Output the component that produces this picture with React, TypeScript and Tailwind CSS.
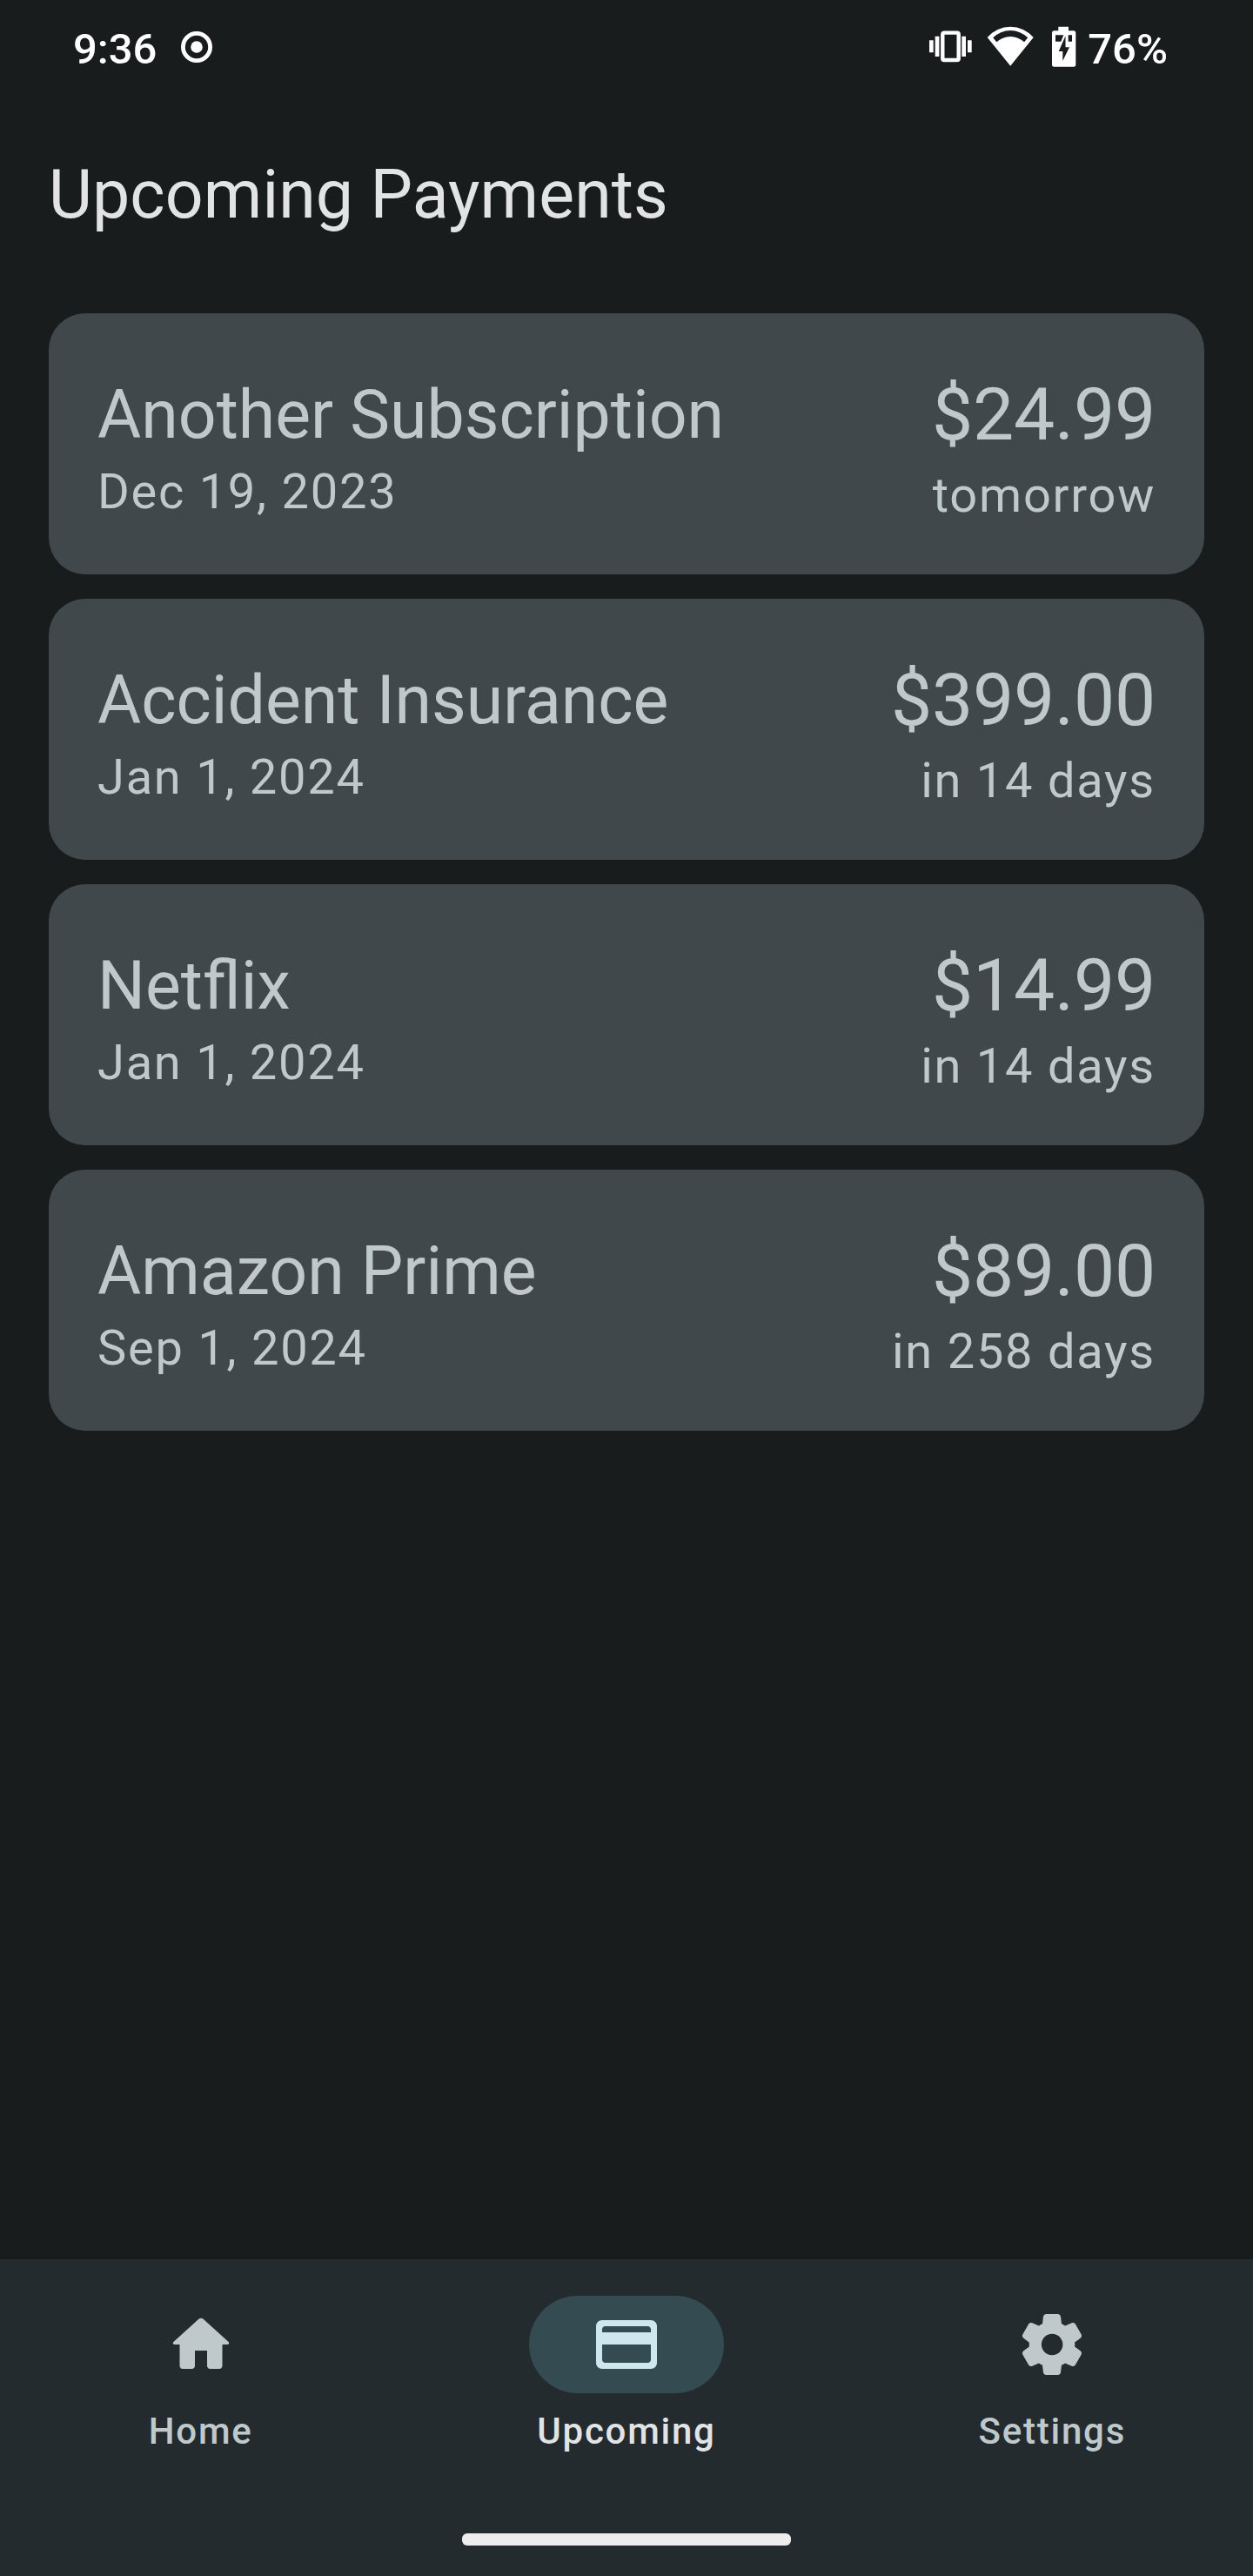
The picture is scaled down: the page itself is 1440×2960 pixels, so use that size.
import React from "react";

const payments = [
  { name: "Another Subscription", date: "Dec 19, 2023", price: "$24.99", due: "tomorrow" },
  { name: "Accident Insurance", date: "Jan 1, 2024", price: "$399.00", due: "in 14 days" },
  { name: "Netflix", date: "Jan 1, 2024", price: "$14.99", due: "in 14 days" },
  { name: "Amazon Prime", date: "Sep 1, 2024", price: "$89.00", due: "in 258 days" },
];

const HOME = "M10 19v-5h4v5c0 .55.45 1 1 1h3c.55 0 1-.45 1-1v-7h1.7c.46 0 .68-.57.33-.87L12.67 3.6c-.38-.34-.96-.34-1.34 0l-8.36 7.53c-.34.3-.13.87.33.87H5v7c0 .55.45 1 1 1h3c.55 0 1-.45 1-1z";
const CARD = "M20 4H4c-1.11 0-1.99.89-1.99 2L2 18c0 1.11.89 2 2 2h16c1.11 0 2-.89 2-2V6c0-1.11-.89-2-2-2zm-1 14H5c-.55 0-1-.45-1-1v-5h16v5c0 .55-.45 1-1 1zm1-10H4V7c0-.55.45-1 1-1h14c.55 0 1 .45 1 1v1z";
const GEAR = "M19.5 12c0-.23-.01-.45-.03-.68l1.86-1.41c.4-.3.51-.86.26-1.3l-1.87-3.23c-.25-.44-.79-.62-1.25-.42l-2.15.91c-.37-.26-.76-.49-1.17-.68l-.29-2.31c-.06-.5-.49-.88-.99-.88h-3.73c-.51 0-.94.38-1 .88l-.29 2.31c-.41.19-.8.42-1.17.68l-2.15-.91c-.46-.2-1-.02-1.25.42L2.41 8.62c-.25.44-.14.99.26 1.3l1.86 1.41c-.02.22-.03.44-.03.67s.01.45.03.68l-1.86 1.41c-.4.3-.51.86-.26 1.3l1.87 3.23c.25.44.79.62 1.25.42l2.15-.91c.37.26.76.49 1.17.68l.29 2.31c.06.5.49.88.99.88h3.73c.5 0 .93-.38.99-.88l.29-2.31c.41-.19.8-.42 1.17-.68l2.15.91c.46.2 1 .02 1.25-.42l1.87-3.23c.25-.44.14-.99-.26-1.3l-1.86-1.41c.03-.23.04-.45.04-.68zm-7.46 3.5c-1.93 0-3.5-1.57-3.5-3.5s1.57-3.5 3.5-3.5 3.5 1.57 3.5 3.5-1.57 3.5-3.5 3.5z";

const tabs = [
  { label: "Home", path: HOME, active: false },
  { label: "Upcoming", path: CARD, active: true },
  { label: "Settings", path: GEAR, active: false },
];

function RecordIcon() {
  return (
    <svg className="size-[38px]" viewBox="0 0 38 38" fill="none">
      <circle cx="19" cy="19" r="15.6" stroke="white" strokeWidth="4.8" />
      <circle cx="19" cy="19" r="6.8" fill="white" />
    </svg>
  );
}

function VibrateIcon() {
  return (
    <svg className="h-[37px] w-[49px]" viewBox="0 0 49 37" fill="white">
      <rect x="0" y="11.3" width="4.7" height="14" rx="0.5" />
      <rect x="6.7" y="6.7" width="4.7" height="23.3" rx="0.5" />
      <rect x="15.3" y="2.6" width="18.4" height="31.4" rx="1.8" fill="none" stroke="white" strokeWidth="4.4" />
      <rect x="37.3" y="6.7" width="4.7" height="23.3" rx="0.5" />
      <rect x="44" y="11.3" width="4.7" height="14" rx="0.5" />
    </svg>
  );
}

function WifiIcon() {
  return (
    <svg className="h-[46px] w-[54px]" viewBox="0 0 54 46" fill="white" fillRule="evenodd">
      <path d="M0.7 13A34.7 34.7 0 0 1 53.7 13L27.2 45.7ZM7.2 13.3L11.3 18.3A23.2 23.2 0 0 1 43.1 18.3L47.2 13.3A28.2 28.2 0 0 0 7.2 13.3Z" />
    </svg>
  );
}

function BatteryIcon() {
  return (
    <svg className="h-[47px] w-[28px]" viewBox="0 0 28 47" fill="white" fillRule="evenodd">
      <path d="M7.3 0.7H19V5.3H24.8A2.5 2.5 0 0 1 27.3 7.8V44.2A2.5 2.5 0 0 1 24.8 46.7H2.5A2.5 2.5 0 0 1 0 44.2V7.8A2.5 2.5 0 0 1 2.5 5.3H7.3ZM4 10.3V17.7H10.3L13.3 10.3ZM18.7 10.3V17.7H23V10.3ZM15.5 11.3L7.7 29H12.3V40L20 24.3H15.5Z" />
    </svg>
  );
}

export default function App() {
  return (
    <div className="flex h-[2960px] w-[1440px] flex-col bg-[#191c1d] font-['Roboto',sans-serif] text-[#bfc8cb]">
      <header className="flex h-[108px] items-center justify-between pl-[84px] pr-[98px] text-[49px] font-medium text-white">
        <div className="flex items-center gap-[27px]">
          <span className="pt-1.5">9:36</span>
          <RecordIcon />
        </div>
        <div className="flex items-center">
          <div className="flex items-center pb-0.5">
            <VibrateIcon />
            <span className="ml-[17px]"><WifiIcon /></span>
            <span className="ml-[21px]"><BatteryIcon /></span>
          </div>
          <span className="ml-[13px] pt-1.5">76%</span>
        </div>
      </header>
      <h1 className="mx-14 mt-[70px] h-[92px] whitespace-nowrap text-[77px] leading-[92px] tracking-[0.1px] text-[#e1e3e4]">Upcoming Payments</h1>
      <main className="mx-14 mt-[90px] flex flex-1 flex-col gap-7">
        {payments.map((p) => (
          <section key={p.name} className="flex h-[300px] justify-between rounded-[42px] bg-[#40484b] px-14">
            <div className="flex flex-col gap-2.5 pt-[72px]">
              <p className="text-[77px] leading-[90px]">{p.name}</p>
              <p className="text-[56px] leading-[66px] tracking-[1.75px]">{p.date}</p>
            </div>
            <div className="flex flex-col items-end gap-2.5 pt-[68px]">
              <p className="text-[84px] leading-[98px] tracking-[-0.2px]">{p.price}</p>
              <p className="text-[56px] leading-[66px] tracking-[1.75px]">{p.due}</p>
            </div>
          </section>
        ))}
      </main>
      <nav className="flex h-[364px] flex-col justify-between bg-[#232b2e] pt-[42px] pb-[35px]">
        <div className="flex gap-7">
          {tabs.map((t) => (
            <div key={t.label} className="flex flex-1 flex-col items-center">
              <div className={t.active ? "flex h-28 w-56 items-center justify-center rounded-full bg-[#334b51] text-[#cee7ee]" : "flex h-28 w-56 items-center justify-center"}>
                <svg className="size-[84px]" viewBox="0 0 24 24" fill="currentColor"><path d={t.path} /></svg>
              </div>
              <p className={t.active ? "mt-4 text-[42px] font-medium leading-[56px] tracking-[1.75px] text-[#e1e3e4]" : "mt-4 text-[42px] font-medium leading-[56px] tracking-[1.75px]"}>{t.label}</p>
            </div>
          ))}
        </div>
        <div className="h-3.5 w-[378px] self-center rounded-[6px] bg-[#ededed]" />
      </nav>
    </div>
  );
}
